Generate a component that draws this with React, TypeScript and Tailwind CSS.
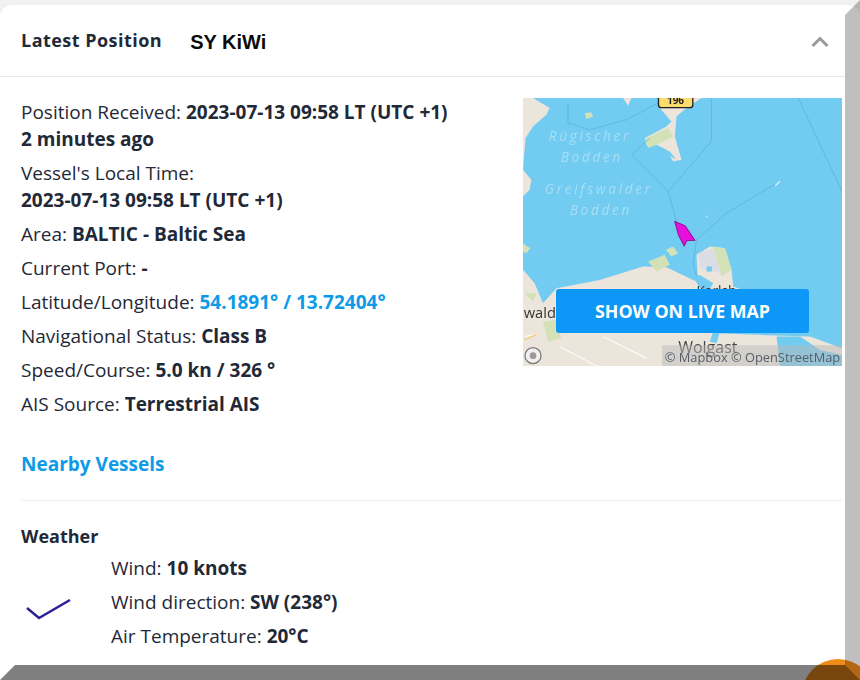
export default function App() {
  const rows = (label: string, value: string, blue = false) => (
    <div className="mb-[7px] leading-[27px]">
      {label} <b className={blue ? "font-bold text-[#0d9be8]" : "font-bold"}>{value}</b>
    </div>
  );
  return (
    <div className="relative h-[680px] w-[860px] overflow-hidden bg-[#f1f1f1] font-['Open_Sans',sans-serif] text-[19px] text-[#1f2937]">
      <div className="mt-[5px] h-[675px] rounded-tl-xl rounded-tr-xl bg-white">
        <div className="flex h-[72px] w-[845px] items-center border-b border-[#e5e7eb] pl-[21px] pr-[16px]">
          <div className="text-[18px] font-bold tracking-[0.47px]">Latest Position</div>
          <div className="ml-[28px] mt-[2px] font-['Liberation_Sans',sans-serif] text-[20px] font-bold text-[#0b0b0b]">SY KiWi</div>
          <svg className="ml-auto mt-[2px]" width="18" height="12" viewBox="0 0 18 12">
            <path d="M1.5 10 L9 2.5 L16.5 10" fill="none" stroke="#9a9a9a" strokeWidth="3" />
          </svg>
        </div>
        <div className="flex w-[842px] justify-between pl-[21px] pt-[21px]">
          <div className="pt-[1px]">
            <div className="mb-[7px] leading-[27px]">
              Position Received: <b>2023-07-13 09:58 LT (UTC +1)</b>
              <br />
              <b>2 minutes ago</b>
            </div>
            <div className="mb-[7px] leading-[27px]">
              Vessel's Local Time:
              <br />
              <b>2023-07-13 09:58 LT (UTC +1)</b>
            </div>
            {rows("Area:", "BALTIC - Baltic Sea")}
            {rows("Current Port:", "-")}
            {rows("Latitude/Longitude:", "54.1891° / 13.72404°", true)}
            {rows("Navigational Status:", "Class B")}
            {rows("Speed/Course:", "5.0 kn / 326 °")}
            {rows("AIS Source:", "Terrestrial AIS")}
          </div>
          <div className="relative h-[268px] w-[319px] shrink-0 overflow-hidden">
            <svg className="block blur-[0.5px]" width="319" height="268" viewBox="70 55 956 803" fontFamily="'Open Sans',sans-serif">
              <rect x="70" y="55" width="956" height="803" fill="#72cbf0" />
              <g fill="#ece5dc">
                <path d="M70 55 H100 L150 85 L140 105 L100 140 L78 175 L70 270 L95 300 L90 330 L70 350 Z" />
                <path d="M370 55 H395 L385 78 Z" />
                <path d="M475 55 H605 L560 85 L530 110 L525 170 L545 240 L520 245 L500 210 L470 195 L440 195 L435 175 L500 140 L515 125 L480 85 Z" />
                <path d="M70 570 L105 610 L130 670 L170 625 L300 600 L430 560 L500 562 L580 600 L640 625 L600 640 L640 760 L930 770 L1026 805 V858 H70 Z" />
                <path d="M590 525 L630 500 L675 505 L695 570 L700 620 L760 640 L830 760 L600 700 Z" />
              </g>
              <g fill="#d2e2b6">
                <path d="M435 178 L505 145 L520 170 L470 195 L445 205 Z" />
                <path d="M445 545 L495 525 L510 555 L470 575 Z" />
                <path d="M498 510 L520 500 L535 520 L515 530 Z" />
                <path d="M70 490 L92 505 L80 520 L70 515 Z" />
                <path d="M255 100 L275 98 L280 110 L260 118 Z" />
                <path d="M640 500 L675 505 L695 570 L665 590 Z" />
                <path d="M75 640 L110 640 L100 665 Z" />
                <path d="M130 725 L170 720 L185 775 L145 785 Z" />
              </g>
              <path d="M595 520 L640 505 L662 580 L600 565 Z" fill="#dcdce4" />
              <g fill="#72cbf0">
                <path d="M490 210 L510 215 L530 240 L505 225 Z" />
                <path d="M620 560 L636 560 L636 575 L620 575 Z" />
                <path d="M580 590 L600 585 L640 610 L625 635 L600 625 Z" />
                <path d="M640 755 L660 755 L650 790 L630 785 Z" />
                <path d="M830 770 H900 L960 810 L1026 825 V858 H840 Z" />
              </g>
              <g fill="none" stroke="#5bb4de" strokeWidth="2.5">
                <path d="M205 70 L205 130 L270 150 L380 120 L475 70" />
                <path d="M635 55 V185 L505 335 L395 225 L450 175" />
                <path d="M505 335 L530 425" />
                <path d="M895 55 L1026 335" />
                <path d="M830 310 L680 400 L590 480 L580 550 L590 590" />
              </g>
              <path d="M826 318 L840 304" stroke="#dff3fb" strokeWidth="4" />
              <circle cx="620" cy="410" r="3" fill="#bfe7f7" />
              <path d="M75 770 L115 762 M310 770 L440 835 M180 800 L290 858" stroke="#fff" strokeWidth="3" fill="none" />
              <path d="M75 780 L112 762" stroke="#f2c968" strokeWidth="3" fill="none" />
              <rect x="476" y="40" width="103" height="44" rx="9" fill="#fcdc6c" stroke="#222" strokeWidth="4" />
              <text x="527" y="72" textAnchor="middle" fontSize="30" fontWeight="700" fill="#222">196</text>
              <g fill="#a8def6" fontSize="41" fontStyle="italic" letterSpacing="8">
                <text x="147" y="183">Rügischer</text>
                <text x="183" y="248">Bodden</text>
                <text x="135" y="343">Greifswalder</text>
                <text x="210" y="407">Bodden</text>
              </g>
              <path d="M525 425 L556 438 L585 481 L561 482 L553 498 L536 466 Z" fill="#e60fdc" stroke="#8e1390" strokeWidth="3" />
              <text x="72" y="713" fontSize="44" fill="#333">wald</text>
              <text x="590" y="648" fontSize="41" fill="#333">Karlsh</text>
              <text x="535" y="820" fontSize="48" fill="#444">Wolgast</text>
              <rect x="487" y="796" width="539" height="62" fill="#b9b9b9" fillOpacity="0.5" />
              <text x="495" y="846" fontSize="38.5" fill="#555f68">© Mapbox © OpenStreetMap</text>
              <circle cx="100" cy="827" r="24" fill="#f5f5f5" fillOpacity="0.7" stroke="#7a7a7a" strokeWidth="4" />
              <circle cx="100" cy="827" r="10" fill="#9a9a9a" />
            </svg>
            <button className="absolute left-[33px] top-[191px] h-[44px] w-[253px] rounded-[3px] bg-[#0d98f7] text-[17.8px] font-bold text-white">
              SHOW ON LIVE MAP
            </button>
          </div>
        </div>
        <div className="mt-[26px] pl-[21px] text-[19px] font-bold leading-[27px] text-[#0d9be8]">Nearby Vessels</div>
        <div className="ml-[21px] mr-[18px] mt-[22px] border-t border-[#eceef0]" />
        <div className="pl-[21px] pt-[22px]">
          <div className="text-[18px] font-bold leading-[27px]">Weather</div>
          <div className="flex pt-[5px]">
            <div className="flex w-[90px] items-center pl-[5px] pt-[17px]">
              <svg width="46" height="24" viewBox="0 0 46 24">
                <path d="M1 9 L13 19 L44 1" fill="none" stroke="#2a1f96" strokeWidth="2.4" />
              </svg>
            </div>
            <div>
              <div className="mb-[7px] leading-[27px]">Wind: <b>10 knots</b></div>
              <div className="mb-[7px] leading-[27px]">Wind direction: <b>SW (238°)</b></div>
              <div className="leading-[27px]">Air Temperature: <b>20°C</b></div>
            </div>
          </div>
        </div>
      </div>
      <div className="absolute left-[802px] top-[659px] h-[72px] w-[72px] rounded-full bg-[#f08a18]" />
      <div className="absolute bottom-0 right-0 top-0 w-[15px] bg-black/25 [clip-path:polygon(0_15px,100%_0,100%_100%,0_665px)]" />
      <div className="absolute bottom-0 left-0 right-0 h-[15px] bg-black/50 [clip-path:polygon(15px_0,845px_0,100%_100%,0_100%)]" />
    </div>
  );
}
